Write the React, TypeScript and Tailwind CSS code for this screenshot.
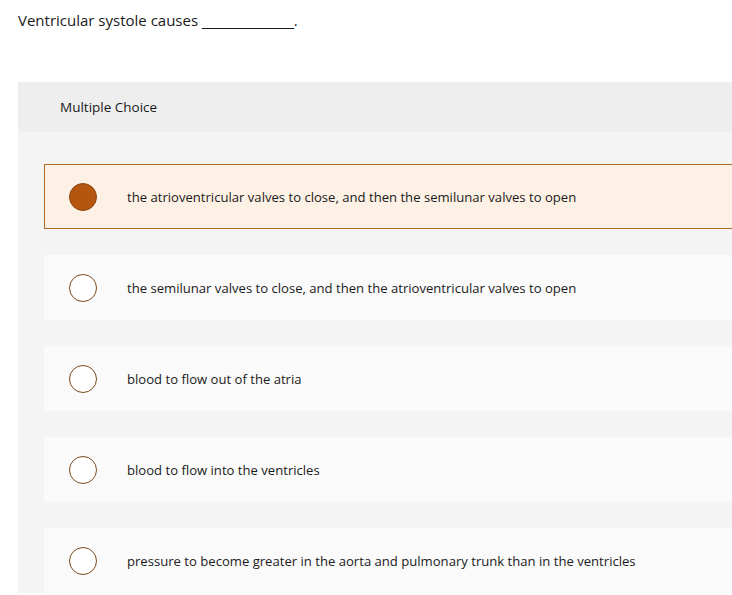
import React from "react";

const options = [
  "the atrioventricular valves to close, and then the semilunar valves to open",
  "the semilunar valves to close, and then the atrioventricular valves to open",
  "blood to flow out of the atria",
  "blood to flow into the ventricles",
  "pressure to become greater in the aorta and pulmonary trunk than in the ventricles",
];

export default function App() {
  return (
    <div className="w-[732px] h-[595px] overflow-hidden bg-white text-[#1a1a1a]" style={{ fontFamily: '"Open Sans", sans-serif' }}>
      <div className="pl-[18px] pt-[10px] h-[82px] text-[15px] leading-[20px]">
        Ventricular systole causes{" "}
        <span style={{ fontFamily: '"Liberation Sans", sans-serif' }}>___________</span>.
      </div>
      <div className="ml-[18px] bg-[#f4f4f4]">
        <div className="h-[50px] bg-[#eeeeee] pl-[42px] flex items-center text-[13.5px]">
          Multiple Choice
        </div>
        <div className="pl-[26px] pt-[32px] flex flex-col gap-[26px]">
          {options.map((o, i) => (
            <div
              key={i}
              className={
                i === 0
                  ? "h-[65px] border border-r-0 border-[#b06a2a] bg-[#fdf1e5] flex items-center"
                  : "h-[65px] bg-[#fafafa] flex items-center"
              }
            >
              <div
                className={
                  i === 0
                    ? "ml-[24px] w-[28px] h-[28px] rounded-full bg-[#b5560e] border border-[#8a4410] shrink-0"
                    : "ml-[25px] w-[28px] h-[28px] rounded-full bg-white border-[1.5px] border-[#7b4a1c] shrink-0"
                }
              />
              <div className="ml-[30px] pt-[2px] text-[13.1px] whitespace-nowrap">{o}</div>
            </div>
          ))}
        </div>
      </div>
    </div>
  );
}
